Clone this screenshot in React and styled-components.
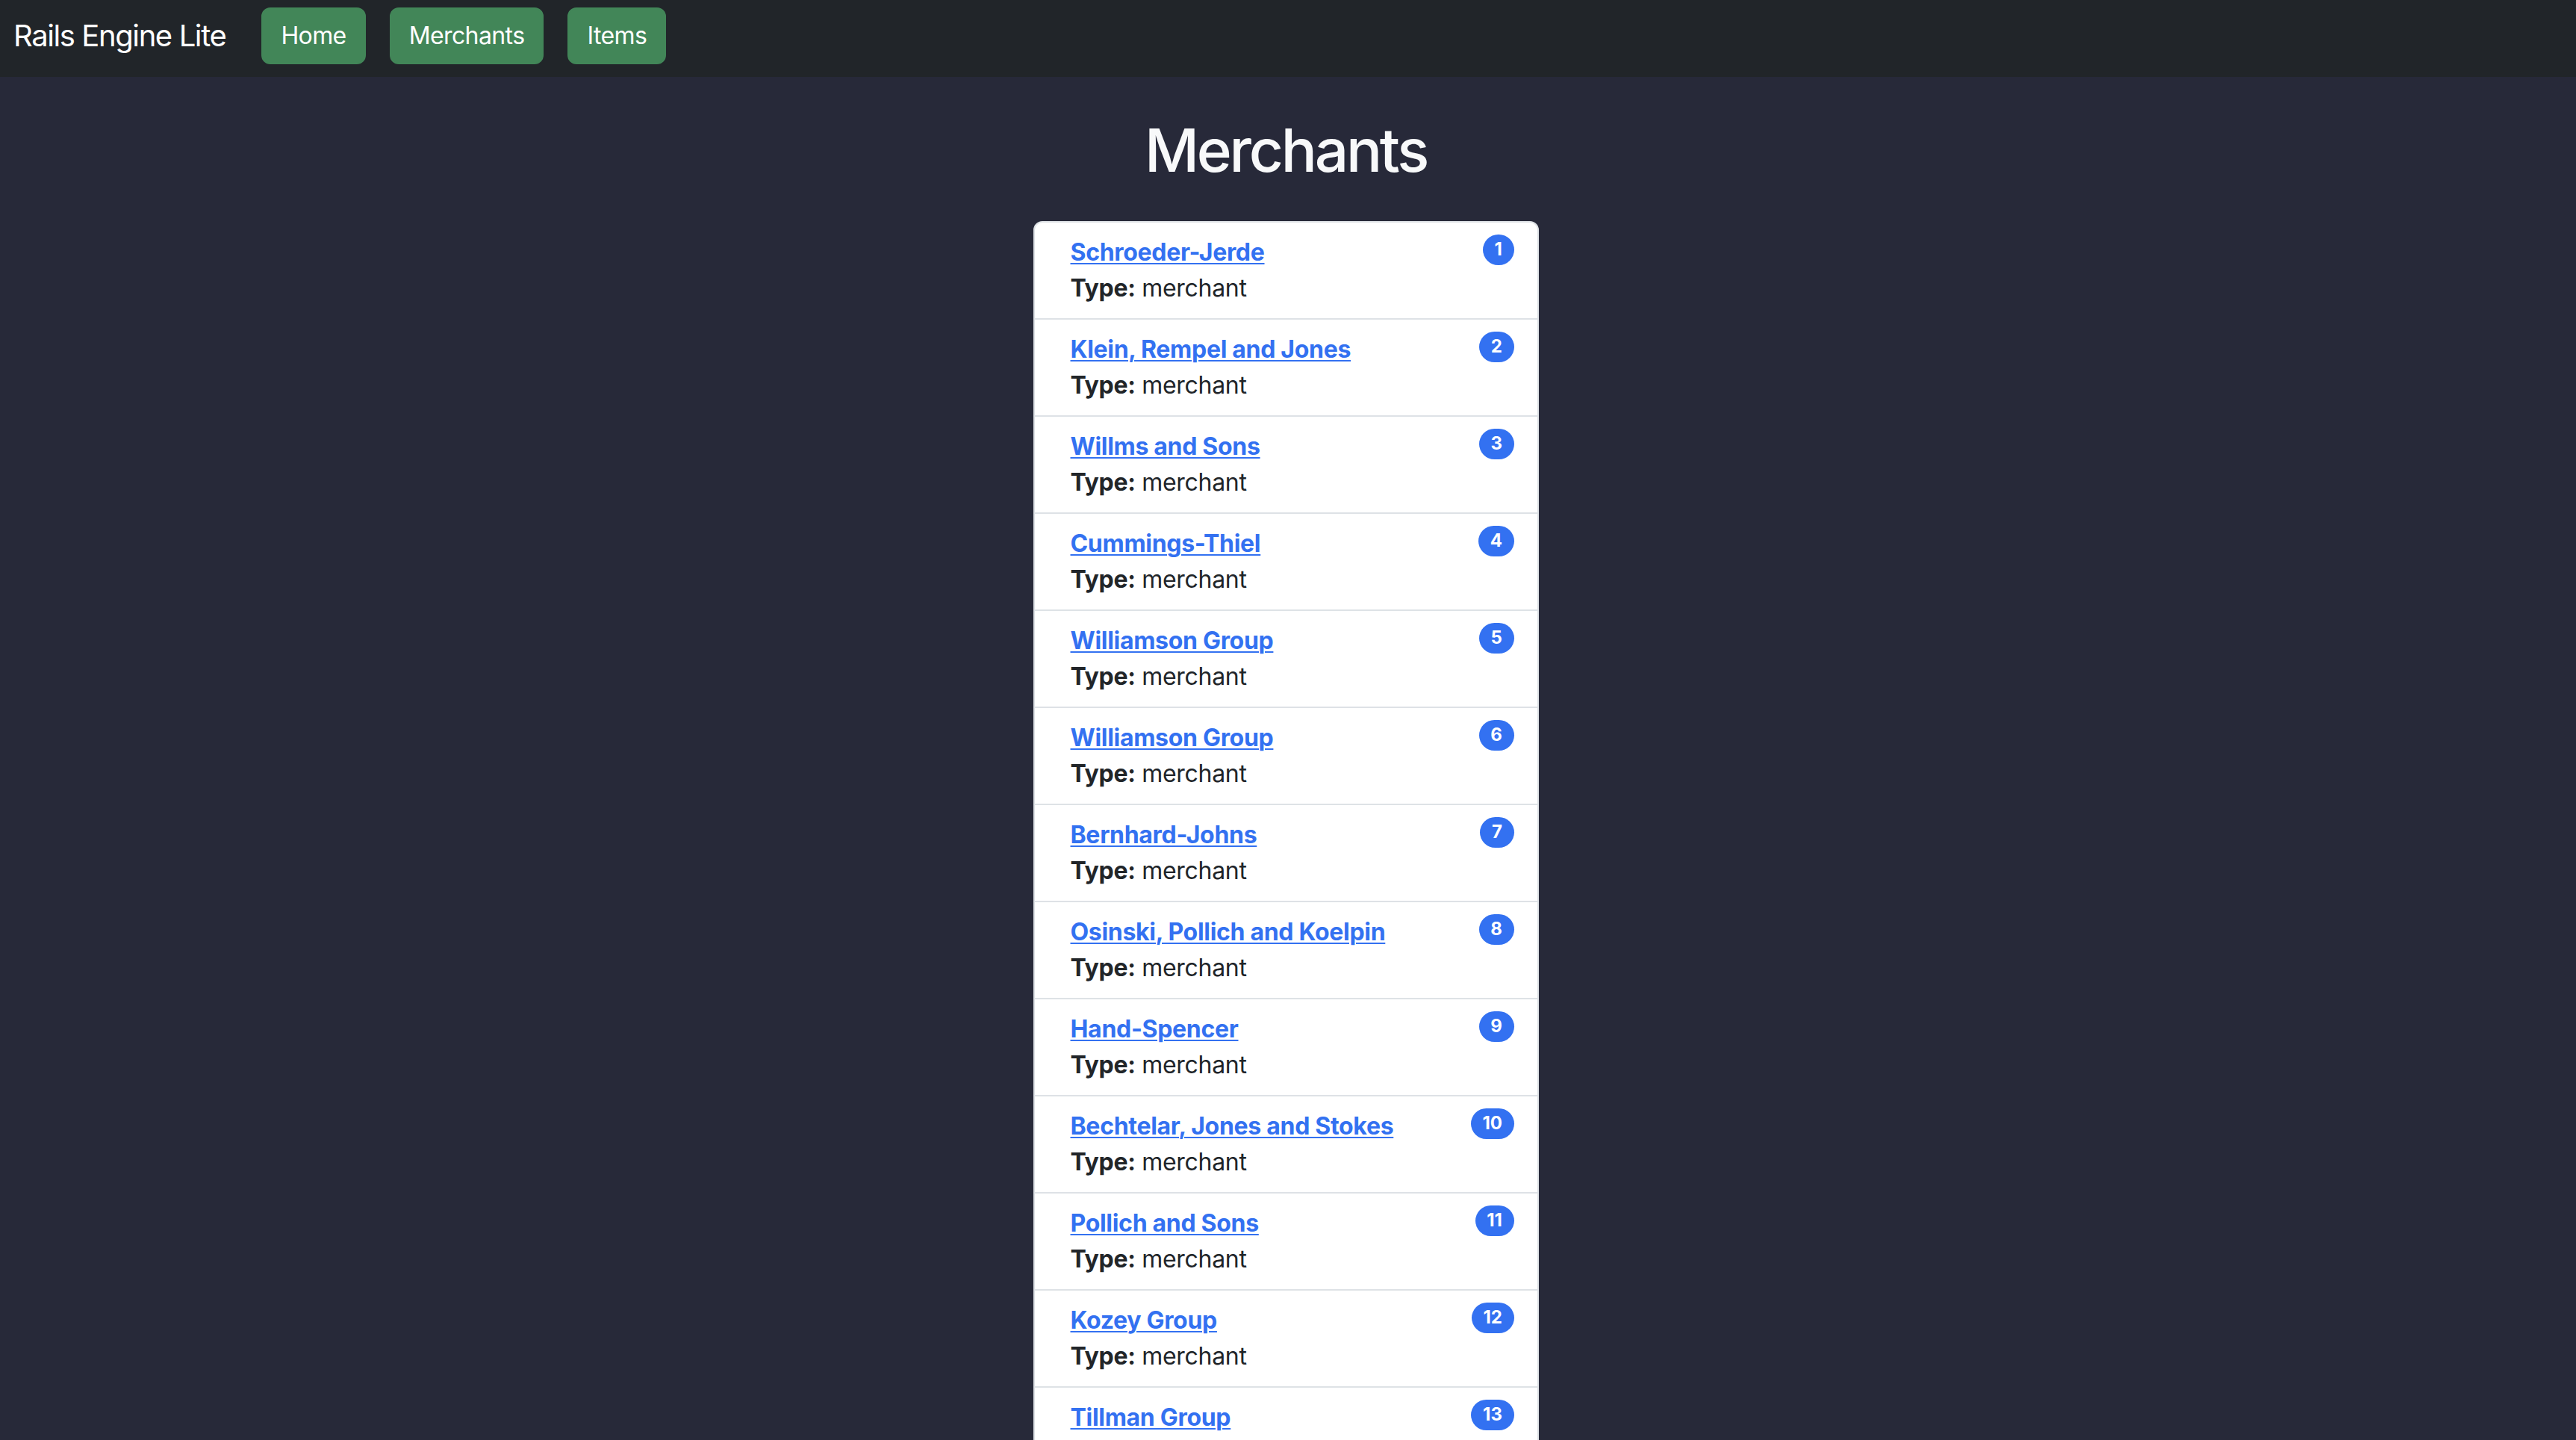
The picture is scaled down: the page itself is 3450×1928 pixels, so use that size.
import React from "react";
import styled, { createGlobalStyle } from "styled-components";

// Página de comerciantes: navbar escura, título e lista com badges

const GlobalStyle = createGlobalStyle`
  html, body {
    margin: 0;
    padding: 0;
    background: #272939;
    min-height: 100%;
  }
  body {
    font-family: Inter, "Noto Sans", "Liberation Sans", sans-serif;
    font-size: 32px;
    line-height: 1.5;
    color: #212529;
  }
  * {
    box-sizing: border-box;
  }
`

const Page = styled.div`
  min-height: 100vh;
  background: #272939;
`

const Navbar = styled.nav`
  height: 103px;
  background: #212529;
  display: flex;
  align-items: flex-start;
  padding: 10px 16px 17px 18px;
`

const Brand = styled.a`
  font-size: 40px;
  line-height: 76px;
  color: #ffffff;
  text-decoration: none;
  margin-right: 32px;
  letter-spacing: -1.4px;
`

const NavButton = styled.button`
  font-family: inherit;
  font-size: 32px;
  line-height: 48px;
  letter-spacing: -0.6px;
  color: #ffffff;
  background: #428658;
  border: 2px solid #428658;
  border-radius: 12px;
  padding: 12px 24px;
  margin: 0 16px;
  cursor: pointer;
`

const Main = styled.main`
  display: flex;
  flex-direction: column;
  align-items: center;
  padding-right: 6px;
`

const Titulo = styled.h1`
  font-size: 80px;
  font-weight: 500;
  line-height: 96px;
  letter-spacing: -3.2px;
  color: #f8f9fa;
  margin: 50px 0 47px;
`

const Lista = styled.ul`
  width: 677px;
  list-style: none;
  margin: 0;
  padding: 0;
  background: #ffffff;
  border: 2px solid #dee2e6;
  border-radius: 12px;
  overflow: hidden;
`

const Item = styled.li`
  display: flex;
  justify-content: space-between;
  align-items: flex-start;
  padding: 16px 31px 16px 32px;
  border-top: ${(props) => (props.primeiro ? "none" : "2px solid #dee2e6")};
`

const Info = styled.div`
  margin-left: 16px;
  margin-right: auto;
  letter-spacing: -0.3px;
`

const Nome = styled.a`
  display: block;
  font-weight: 700;
  color: #3371f1;
  text-decoration: underline;
  text-underline-offset: 3px;
  text-decoration-thickness: 2px;
`

const Tipo = styled.div`
  color: #212529;

  b {
    font-weight: 700;
  }
`

const Badge = styled.span`
  display: inline-block;
  font-size: 24px;
  font-weight: 700;
  line-height: 1;
  color: #ffffff;
  background: #3371f1;
  border-radius: 999px;
  padding: 8.4px 15.6px;
`

const merchants = [
  "Schroeder-Jerde",
  "Klein, Rempel and Jones",
  "Willms and Sons",
  "Cummings-Thiel",
  "Williamson Group",
  "Williamson Group",
  "Bernhard-Johns",
  "Osinski, Pollich and Koelpin",
  "Hand-Spencer",
  "Bechtelar, Jones and Stokes",
  "Pollich and Sons",
  "Kozey Group",
  "Tillman Group",
]

function App() {
  return (
    <Page>
      <GlobalStyle />

      <Navbar>
        <Brand href="#">Rails Engine Lite</Brand>
        <NavButton>Home</NavButton>
        <NavButton>Merchants</NavButton>
        <NavButton>Items</NavButton>
      </Navbar>

      <Main>
        <Titulo>Merchants</Titulo>

        <Lista>
          {merchants.map((nome, i) => (
            <Item key={i} primeiro={i === 0}>
              <Info>
                <Nome href="#">{nome}</Nome>
                <Tipo>
                  <b>Type:</b> merchant
                </Tipo>
              </Info>
              <Badge>{i + 1}</Badge>
            </Item>
          ))}
        </Lista>
      </Main>
    </Page>
  );
}

export default App;
